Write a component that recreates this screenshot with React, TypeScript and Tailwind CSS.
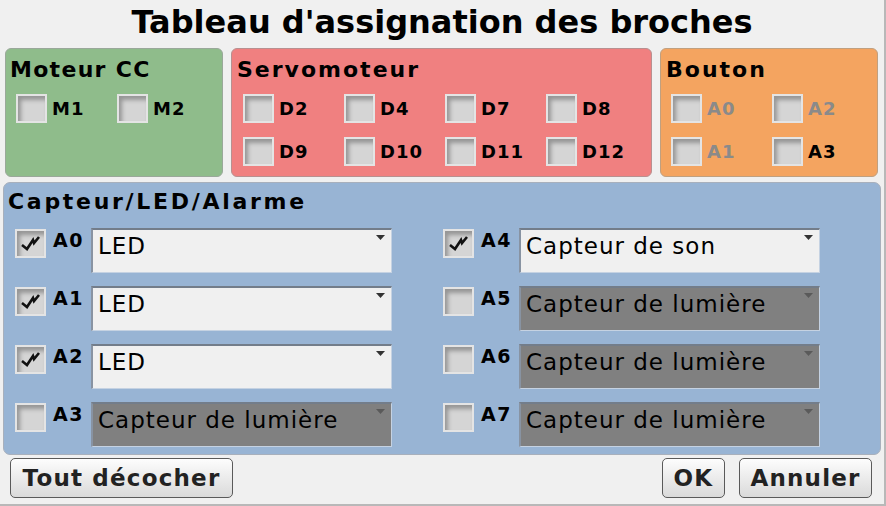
const font = { fontFamily: '"DejaVu Sans", Verdana, sans-serif' };

const Check = () => (
  <svg width="22" height="16" viewBox="0 0 22 16" className="absolute left-[3px] top-[5px]">
    <path d="M2 9 L7 13 L13 4 L14 7 L19 1" fill="none" stroke="#111" strokeWidth="2.6" strokeLinejoin="miter" />
  </svg>
);

const Box = ({ checked = false }: { checked?: boolean }) => (
  <div className="relative w-[31px] h-[29px] shrink-0 border-2 border-[#e4e4e4] bg-[#d5d5d5] shadow-[inset_3px_4px_4px_rgba(0,0,0,0.3)]">
    {checked && <Check />}
  </div>
);

const Pin = ({ label, grey = false }: { label: string; grey?: boolean }) => (
  <div className="flex items-center w-[101px] shrink-0">
    <Box />
    <span
      className={`ml-[5px] text-[18px] font-bold tracking-[1px] leading-none ${grey ? "text-[#8a8a8a]" : "text-black"}`}
    >
      {label}
    </span>
  </div>
);

const Select = ({ value, on }: { value: string; on: boolean }) => (
  <div
    className={`relative w-[301px] h-[45px] shrink-0 border-t-2 border-l-2 border-r border-b border-t-[#737d8a] border-l-[#8893a2] border-r-[#c5d2e2] border-b-[#c5d2e2] ${on ? "bg-[#f0f0f0]" : "bg-[#808080]"}`}
  >
    <span className="absolute left-[5px] top-[2px] text-[23px] leading-[28px] tracking-[1px] text-black">{value}</span>
    <svg width="9" height="5" className="absolute right-[6px] top-[5px]">
      <polygon points="0,0 9,0 4.5,5" fill={on ? "#333" : "#5a5a5a"} />
    </svg>
  </div>
);

const Row = ({ pin, value, on }: { pin: string; value: string; on: boolean }) => (
  <div className="flex items-start h-[45px]">
    <div className="mt-[1px]">
      <Box checked={on} />
    </div>
    <span className="ml-[7px] mt-[3px] w-[38px] text-[19px] font-bold tracking-[1.5px] leading-none">{pin}</span>
    <Select value={value} on={on} />
  </div>
);

const btn =
  "h-[40px] rounded-[5px] border border-[#5a5a5a] bg-gradient-to-b from-[#fdfdfd] to-[#dadada] text-[23px] font-bold tracking-[1.2px] text-[#222]";

export default function App() {
  const left = [
    { pin: "A0", value: "LED", on: true },
    { pin: "A1", value: "LED", on: true },
    { pin: "A2", value: "LED", on: true },
    { pin: "A3", value: "Capteur de lumière", on: false },
  ];
  const right = [
    { pin: "A4", value: "Capteur de son", on: true },
    { pin: "A5", value: "Capteur de lumière", on: false },
    { pin: "A6", value: "Capteur de lumière", on: false },
    { pin: "A7", value: "Capteur de lumière", on: false },
  ];

  return (
    <div style={font} className="w-[886px] h-[506px] bg-[#f0f0f0] border-r-2 border-b-2 border-[#b8b8b8] flex flex-col overflow-hidden">
      <h1 className="h-[48px] pt-[3px] text-center text-[32px] font-bold leading-[38px] text-black">
        Tableau d'assignation des broches
      </h1>

      <div className="flex gap-[8px] pl-[5px] h-[129px]">
        <div className="w-[218px] rounded-[6px] border border-[#9aa89a] bg-[#8fbc8b] pl-[4px] pt-[9px]">
          <div className="text-[22px] font-bold tracking-[1.3px] leading-[24px]">Moteur CC</div>
          <div className="flex mt-[12px] pl-[6px]">
            <Pin label="M1" />
            <Pin label="M2" />
          </div>
        </div>

        <div className="w-[421px] rounded-[6px] border border-[#b89090] bg-[#f08080] pl-[5px] pt-[9px]">
          <div className="text-[22px] font-bold tracking-[2px] leading-[24px]">Servomoteur</div>
          <div className="flex flex-col gap-[14px] mt-[12px] pl-[6px]">
            <div className="flex">
              <Pin label="D2" />
              <Pin label="D4" />
              <Pin label="D7" />
              <Pin label="D8" />
            </div>
            <div className="flex">
              <Pin label="D9" />
              <Pin label="D10" />
              <Pin label="D11" />
              <Pin label="D12" />
            </div>
          </div>
        </div>

        <div className="w-[218px] rounded-[6px] border border-[#c0a080] bg-[#f4a460] pl-[5px] pt-[9px]">
          <div className="text-[22px] font-bold tracking-[2px] leading-[24px]">Bouton</div>
          <div className="flex flex-col gap-[14px] mt-[12px] pl-[5px]">
            <div className="flex">
              <Pin label="A0" grey />
              <Pin label="A2" grey />
            </div>
            <div className="flex">
              <Pin label="A1" grey />
              <Pin label="A3" />
            </div>
          </div>
        </div>
      </div>

      <div className="mt-[5px] ml-[3px] w-[878px] h-[273px] rounded-[7px] border border-[#a8b0bc] bg-[#98b4d4] pl-[4px] pt-[7px]">
        <div className="text-[22px] font-bold tracking-[2.7px] leading-[24px]">Capteur/LED/Alarme</div>
        <div className="flex mt-[14px] pl-[7px]">
          <div className="flex flex-col gap-[13px] w-[428px]">
            {left.map((r) => (
              <Row key={r.pin} {...r} />
            ))}
          </div>
          <div className="flex flex-col gap-[13px]">
            {right.map((r) => (
              <Row key={r.pin} {...r} />
            ))}
          </div>
        </div>
      </div>

      <div className="flex items-center mt-[3px] px-[10px] h-[40px]">
        <button className={`${btn} w-[223px]`}>Tout décocher</button>
        <div className="flex-1" />
        <button className={`${btn} w-[63px]`}>OK</button>
        <button className={`${btn} ml-[14px] mr-[2px] w-[133px]`}>Annuler</button>
      </div>
    </div>
  );
}
